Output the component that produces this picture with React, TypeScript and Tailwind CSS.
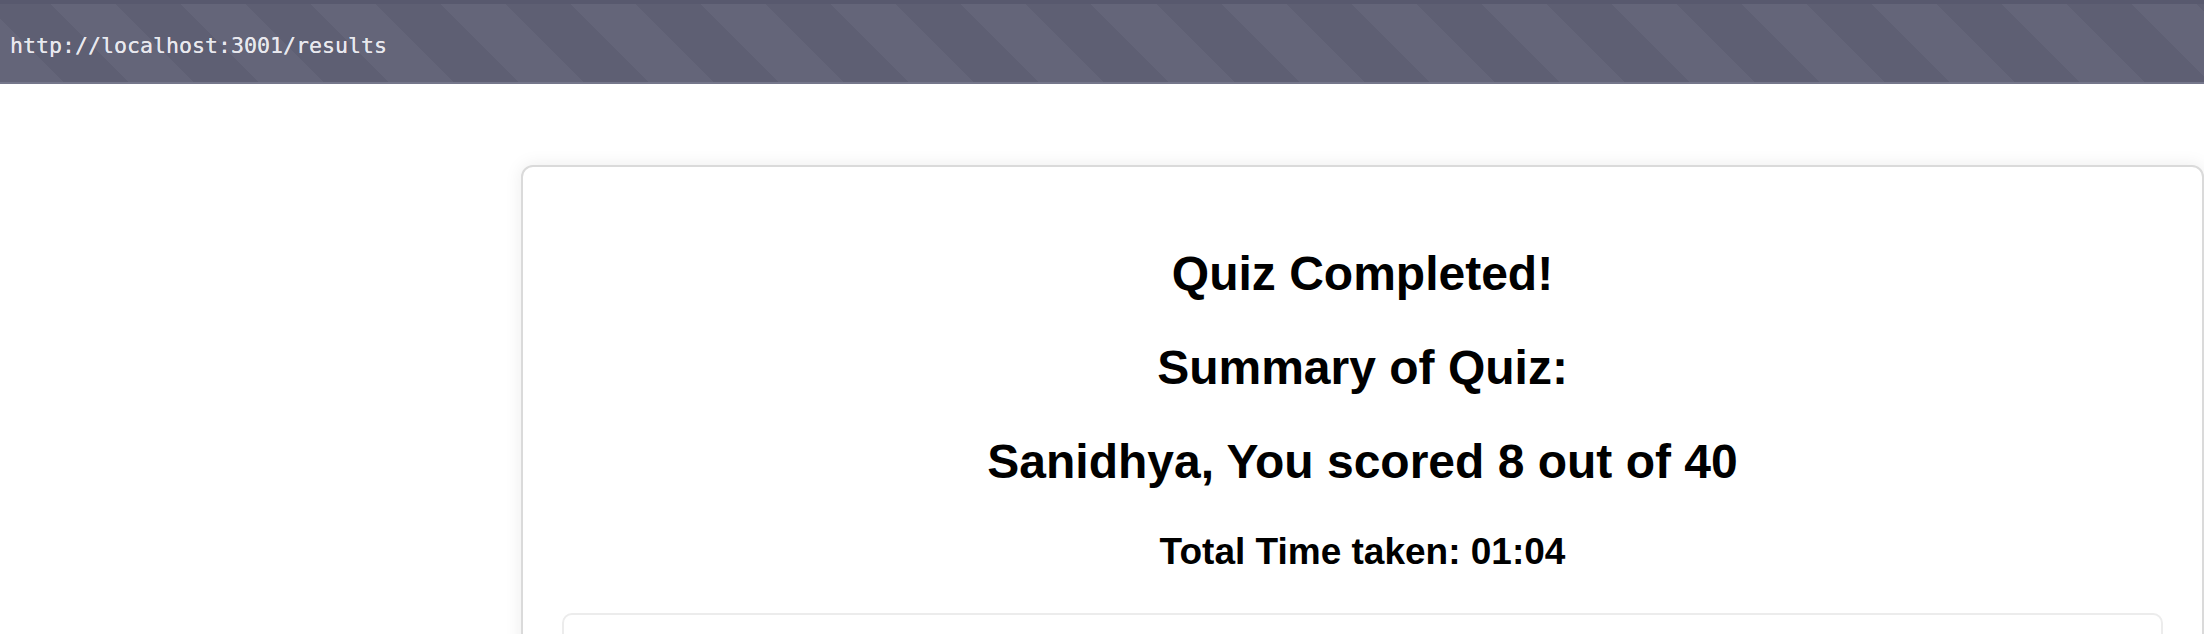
import React from "react";

export default function App() {
  return (
    <div className="min-h-[634px] w-[2204px] overflow-hidden bg-white font-['Liberation_Sans',Arial,sans-serif]">
      <div className="relative h-[84px] w-full bg-[repeating-linear-gradient(45deg,#646579_0px,#646579_46px,#5e5f73_46px,#5e5f73_92px)]">
        <div className="h-[4px] w-full bg-[#58596e]" />
        <div className="flex h-[78px] items-center pl-[10px] pt-[6px] font-['DejaVu_Sans_Mono',monospace] text-[21.6px] text-[#e8e8ee] [text-shadow:0_0_0.4px_#e8e8ee]">
          http://localhost:3001/results
        </div>
        <div className="h-[2px] w-full bg-[#75778b]" />
      </div>
      <div className="ml-[521px] mt-[81px] h-[600px] w-[1683px] rounded-[12px] border-2 border-[#dadada] bg-white px-[39px] pt-[79px] shadow-[0_0_18px_rgba(0,0,0,0.08)]">
        <div className="flex flex-col items-center text-black">
          <h1 className="text-[48px] font-bold leading-[55px]">Quiz Completed!</h1>
          <h1 className="mt-[39px] text-[48px] font-bold leading-[55px]">Summary of Quiz:</h1>
          <h1 className="mt-[39px] text-[48px] font-bold leading-[55px]">Sanidhya, You scored 8 out of 40</h1>
          <h2 className="mt-[41px] text-[37px] font-bold leading-[43px]">Total Time taken: 01:04</h2>
        </div>
        <div className="mt-[40px] h-[200px] w-full rounded-[10px] border-2 border-[#ececec]" />
      </div>
    </div>
  );
}
